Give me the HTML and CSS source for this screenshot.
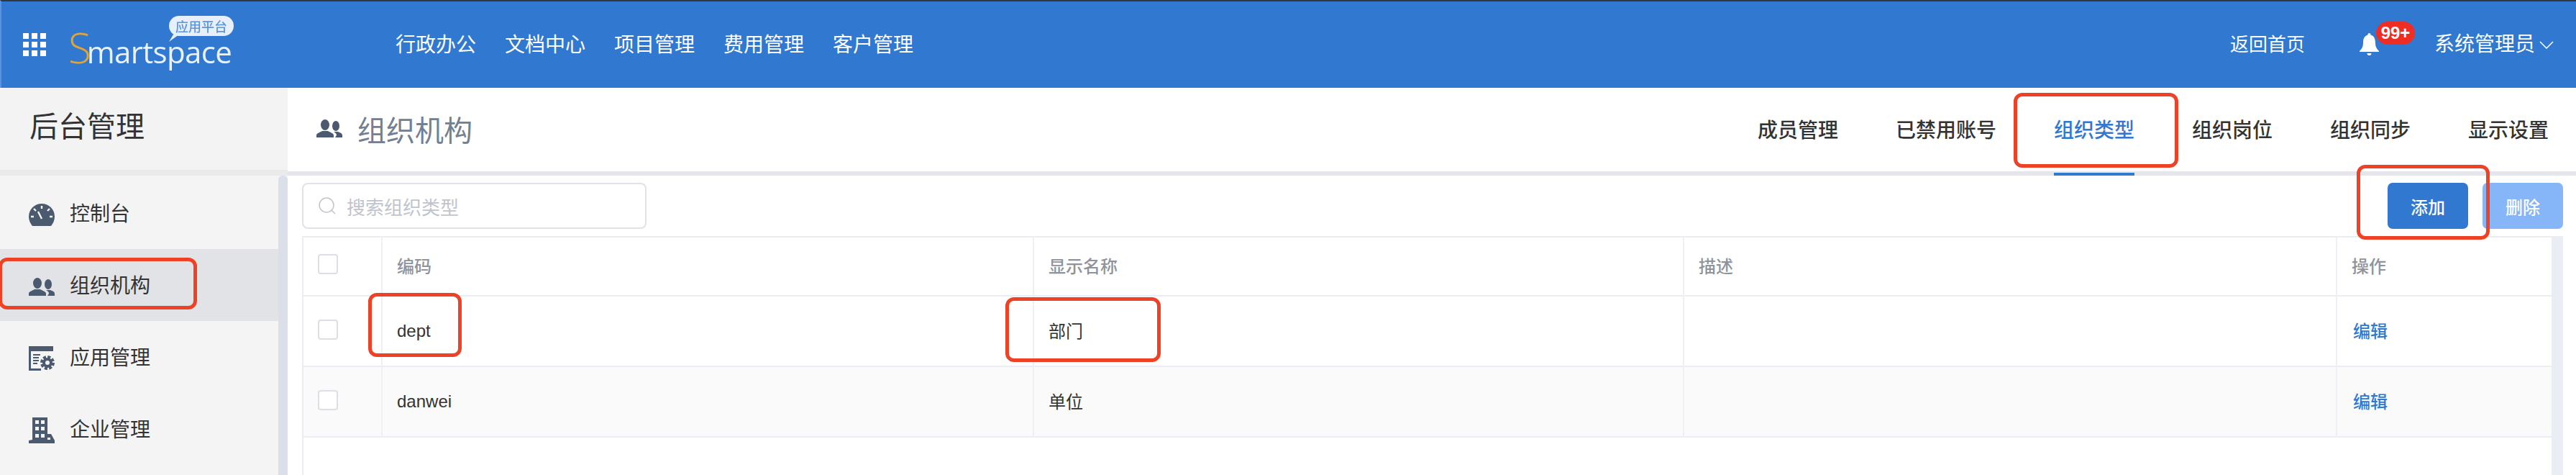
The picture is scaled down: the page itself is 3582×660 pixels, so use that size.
FILE: index.html
```html
<!DOCTYPE html>
<html lang="zh-CN">
<head>
    <meta charset="UTF-8">
    <meta name="viewport" content="width=device-width, initial-scale=1.0">
    <title>后台管理</title>
    <link rel="stylesheet" href="styles.css">
</head>
<body>
    <header class="topbar">
        <div class="apps-icon">
            <span></span><span></span><span></span>
            <span></span><span></span><span></span>
            <span></span><span></span><span></span>
        </div>
        <div class="logo">
            <span class="logo-s">S</span><span class="logo-rest">martspace</span>
            <span class="logo-bubble">应用平台</span>
            <svg class="logo-tail" width="14" height="10" viewBox="0 0 14 10"><path d="M6 0h8L0 10z"/></svg>
        </div>
        <nav class="top-nav">
            <a>行政办公</a>
            <a>文档中心</a>
            <a>项目管理</a>
            <a>费用管理</a>
            <a>客户管理</a>
        </nav>
        <div class="top-right">
            <a class="home-link">返回首页</a>
            <div class="bell">
                <svg width="27" height="32" viewBox="0 0 27 32"><path d="M13.5 0c-1.5 0-2 1-2 2.5C6 4 5 9 5 14c0 5-2 8-5 11v1h27v-1c-3-3-5-6-5-11 0-5-1-10-6.5-11.5C15.500 1 15 0 13.500 0zM10.500 28a3 3 0 0 0 6 0z"/></svg>
                <span class="badge">99+</span>
            </div>
            <a class="user-link">系统管理员</a>
            <svg class="chevron" width="20" height="11" viewBox="0 0 20 11"><path d="M1 1l9 9 9-9"/></svg>
        </div>
    </header>

    <div class="main">
        <aside class="sidebar">
            <div class="side-title">后台管理</div>
            <div class="side-body">
                <ul class="side-menu">
                    <li>
                        <svg class="side-icon" width="36" height="31" viewBox="0 0 36 31">
                            <path d="M5 31C2 27 0 23 0 18a18 18 0 0 1 36 0c0 5-2 9-5 13z"/>
                            <path class="cut" d="M18 21l-5-10M18 3v4M7 7l3 3M29 7l-3 3M3 18h4M33 18h-4"/>
                        </svg>
                        控制台
                    </li>
                    <li class="active">
                        <svg class="side-icon" width="36" height="25" viewBox="0 0 36 25">
                            <ellipse cx="12" cy="7.500" rx="6" ry="7.500"/>
                            <path d="M0 25v-3c0-3 5-4 8-6h8c3 2 8 3 8 6v3z"/>
                            <ellipse cx="27" cy="9" rx="5" ry="7"/>
                            <path d="M26 25h10v-3c0-3-4-4-6-5h-6c3 2 4 3 4 5z" />
                        </svg>
                        组织机构
                    </li>
                    <li>
                        <svg class="side-icon" width="36" height="34" viewBox="0 0 36 34">
                            <path d="M0 0h34v7H3v24h14v3H0z"/>
                            <path d="M6 11h10v2H6zM6 15h8v2H6zM6 19h8v2H6zM6 23h6v2H6z"/>
                            <circle class="gear-teeth" cx="26" cy="23" r="8"/>
                            <circle class="gear-ring" cx="26" cy="23" r="5"/>
                        </svg>
                        应用管理
                    </li>
                    <li>
                        <svg class="side-icon" width="36" height="36" viewBox="0 0 36 36">
                            <path d="M5 0h21v23l5 0 5 9v4H0v-4l5-1z"/>
                            <path class="windows" d="M9 4h5v5H9zM17 4h5v5h-5zM9 13h5v5H9zM17 13h5v5h-5zM9 23h5v5H9zM17 23h5v5h-5zM26 28h4v3h-4z"/>
                        </svg>
                        企业管理
                    </li>
                </ul>
                <div class="side-scroll"></div>
            </div>
        </aside>

        <section class="content">
            <div class="content-head">
                <div class="page-title">
                    <svg class="side-icon" width="36" height="25" viewBox="0 0 36 25">
                        <ellipse cx="12" cy="7.500" rx="6" ry="7.500"/>
                        <path d="M0 25v-3c0-3 5-4 8-6h8c3 2 8 3 8 6v3z"/>
                        <ellipse cx="27" cy="9" rx="5" ry="7"/>
                        <path d="M26 25h10v-3c0-3-4-4-6-5h-6c3 2 4 3 4 5z" />
                    </svg>
                    <h1>组织机构</h1>
                </div>
                <div class="tabs">
                    <a>成员管理</a>
                    <a>已禁用账号</a>
                    <a class="current">组织类型</a>
                    <a>组织岗位</a>
                    <a>组织同步</a>
                    <a>显示设置</a>
                </div>
            </div>

            <div class="toolbar">
                <div class="search">
                    <svg width="24" height="24" viewBox="0 0 24 24"><circle cx="11" cy="11" r="10"/><path d="M18 18l5 5"/></svg>
                    <span>搜索组织类型</span>
                </div>
                <div class="buttons">
                    <button class="btn">添加</button>
                    <button class="btn btn-off">删除</button>
                </div>
            </div>

            <div class="table-wrap">
                <div class="table-area">
                    <table>
                        <colgroup>
                            <col class="col-check">
                            <col class="col-code">
                            <col class="col-name">
                            <col class="col-desc">
                            <col class="col-op">
                        </colgroup>
                        <thead>
                            <tr>
                                <th><i class="check"></i></th>
                                <th>编码</th>
                                <th>显示名称</th>
                                <th>描述</th>
                                <th>操作</th>
                            </tr>
                        </thead>
                        <tbody>
                            <tr>
                                <td><i class="check"></i></td>
                                <td>dept</td>
                                <td class="cn">部门</td>
                                <td></td>
                                <td class="cn"><a class="edit">编辑</a></td>
                            </tr>
                            <tr class="even">
                                <td><i class="check"></i></td>
                                <td>danwei</td>
                                <td class="cn">单位</td>
                                <td></td>
                                <td class="cn"><a class="edit">编辑</a></td>
                            </tr>
                        </tbody>
                    </table>
                </div>
                <div class="table-scroll"></div>
            </div>
        </section>
    </div>

    <!-- red marks drawn over the screenshot -->
    <div class="mark mark-side"></div>
    <div class="mark mark-tab"></div>
    <div class="mark mark-add"></div>
    <div class="mark mark-dept"></div>
    <div class="mark mark-name"></div>
</body>
</html>
```

FILE: styles.css
```css
* {
    box-sizing: border-box;
}

html, body {
    height: 100%;
    overflow: hidden;
}

body {
    position: relative;
    margin: 0;
    display: flex;
    flex-direction: column;
    background: #fff;
    color: #333;
    font-family: "Liberation Sans", "Noto Sans CJK SC", sans-serif;
}

a {
    color: inherit;
}

/* top bar */
.topbar {
    flex: none;
    height: 122px;
    display: flex;
    align-items: center;
    padding-left: 30px;
    background: #3178d1;
    border-top: 2px solid #32363f;
    border-left: 2px solid #5b94dc;
    color: #fff;
}

.apps-icon {
    flex: none;
    width: 32px;
    display: grid;
    grid-template-columns: repeat(3, 8px);
    grid-auto-rows: 8px;
    gap: 4px;
}

.apps-icon span {
    background: #fff;
}

.logo {
    position: relative;
    flex: none;
    width: 240px;
    height: 100%;
    margin-left: 31px;
    padding-top: 24px;
    white-space: nowrap;
    font-family: "Open Sans", sans-serif;
    filter: blur(0.7px);
}

.logo-s {
    color: #e0a535;
    font-size: 58px;
    font-weight: 300;
    line-height: 80px;
    letter-spacing: -6px;
}

.logo-rest {
    font-size: 42px;
    line-height: 80px;
    letter-spacing: -0.600px;
    color: #e9f1fb;
}

.logo-bubble {
    position: absolute;
    left: 140px;
    top: 20px;
    width: 90px;
    height: 28px;
    border-radius: 14px;
    background: #e6effa;
    color: #5d95dc;
    font-family: "Noto Sans CJK SC", sans-serif;
    font-size: 18px;
    font-weight: 500;
    line-height: 28px;
    text-align: center;
}

.logo-tail {
    position: absolute;
    left: 140px;
    top: 46px;
    fill: #e6effa;
}

.top-nav {
    display: flex;
    gap: 40px;
    margin-left: 215px;
    padding-top: 1px;
    font-size: 28px;
    line-height: 40px;
}

.top-right {
    display: flex;
    align-items: center;
    margin-left: auto;
    padding-right: 31px;
}

.home-link {
    font-size: 26px;
    line-height: 40px;
}

.bell {
    position: relative;
    width: 27px;
    height: 32px;
    margin-left: 76px;
    fill: #fff;
}

.bell svg {
    display: block;
}

.badge {
    position: absolute;
    left: 23px;
    top: -16px;
    width: 54px;
    height: 32px;
    border-radius: 16px;
    background: #ee2e24;
    font-size: 24px;
    font-weight: bold;
    line-height: 32px;
    text-align: center;
}

.user-link {
    margin-left: 77px;
    font-size: 28px;
    line-height: 40px;
}

.chevron {
    margin-left: 6px;
    fill: none;
    stroke: #fff;
    stroke-width: 1.5;
}

/* page body */
.main {
    flex: 1;
    display: flex;
    min-height: 0;
}

.sidebar {
    flex: none;
    width: 400px;
    display: flex;
    flex-direction: column;
    background: #f4f4f5;
}

.side-title {
    flex: none;
    height: 122px;
    padding: 34px 0 0 41px;
    border-bottom: 8px solid #eaeaea;
    background: #f3f3f3;
    font-size: 40px;
    line-height: 40px;
}

.side-body {
    flex: 1;
    display: flex;
}

.side-menu {
    flex: 1;
    margin: 2px 0 0;
    padding: 0;
    list-style: none;
}

.side-menu li {
    height: 100px;
    display: flex;
    align-items: center;
    gap: 21px;
    padding: 0 0 2px 40px;
    font-size: 28px;
}

.side-menu li.active {
    background: #e2e3e7;
}

.side-menu .side-icon {
    margin-top: 6px;
}

.side-scroll {
    flex: none;
    width: 13px;
    border-radius: 6px 6px 0 0;
    background: #dbdfe8;
}

.side-icon {
    flex: none;
    fill: #4b5a6e;
}

.side-icon .cut {
    fill: none;
    stroke: #f4f4f5;
    stroke-width: 2.4;
}

.side-icon .windows {
    fill: #f4f4f5;
}

.gear-teeth {
    fill: none;
    stroke: #4b5a6e;
    stroke-width: 4;
    stroke-dasharray: 4 2.280;
}

.gear-ring {
    fill: #f4f4f5;
    stroke: #4b5a6e;
    stroke-width: 4;
}

.content {
    flex: 1;
    min-width: 0;
    display: flex;
    flex-direction: column;
}

.content-head {
    flex: none;
    height: 122px;
    display: flex;
    align-items: center;
    justify-content: space-between;
    padding: 4px 38px 0 40px;
    border-bottom: 6px solid #e4e6eb;
}

.page-title {
    display: flex;
    align-items: center;
    gap: 21px;
}

.page-title .side-icon {
    margin-bottom: 7px;
}

h1 {
    margin: 0;
    color: #738091;
    font-size: 40px;
    font-weight: normal;
    line-height: 50px;
}

.tabs {
    display: flex;
    gap: 80px;
    font-size: 28px;
    font-weight: 500;
    line-height: 40px;
}

.tabs a {
    position: relative;
}

.tabs .current {
    color: #3178d1;
}

.tabs .current::after {
    content: "";
    position: absolute;
    left: 0;
    right: 0;
    bottom: -42px;
    height: 4px;
    background: #3178d1;
}

.toolbar {
    flex: none;
    height: 84px;
    display: flex;
    justify-content: space-between;
    padding: 10px 18px 10px 20px;
}

.search {
    width: 479px;
    display: flex;
    align-items: center;
    gap: 15px;
    padding-left: 21px;
    border: 2px solid #e0e2e8;
    border-radius: 8px;
    color: #c0c4cc;
    font-size: 26px;
}

.search svg {
    fill: none;
    stroke: #c0c4cc;
    stroke-width: 1.500;
}

.buttons {
    display: flex;
    gap: 20px;
}

.btn {
    width: 112px;
    border: none;
    border-radius: 7px;
    background: #3178d1;
    color: #fff;
    font-family: inherit;
    font-size: 24px;
    font-weight: 500;
}

.btn-off {
    background: #86b5f8;
}

.table-wrap {
    flex: 1;
    min-height: 0;
    display: flex;
    margin: 0 18px 0 20px;
}

.table-area {
    flex: 1;
    border-top: 2px solid #eaedf3;
    border-left: 2px solid #eaedf3;
}

.table-scroll {
    flex: none;
    width: 16px;
    background: #eaedf3;
}

table {
    width: 3126px;
    table-layout: fixed;
    border-collapse: separate;
    border-spacing: 0;
    font-size: 24px;
}

.col-check { width: 110px; }
.col-code { width: 906px; }
.col-name { width: 904px; }
.col-desc { width: 908px; }
.col-op { width: 298px; }

th, td {
    padding: 0 0 0 20px;
    border-right: 2px solid #eef0f5;
    border-bottom: 2px solid #eaedf3;
    text-align: left;
}

th:last-child, td:last-child {
    border-right: none;
}

th {
    height: 82px;
    padding-bottom: 3px;
    color: #909399;
    font-weight: 500;
}

td {
    height: 98px;
}

td.cn {
    padding-bottom: 3px;
}

.even td {
    background: #fafafa;
}

.check {
    display: block;
    width: 28px;
    height: 28px;
    margin-top: -4px;
    border: 2px solid #dcdfe6;
    border-radius: 4px;
    background: #fff;
}

.edit {
    margin-left: 2px;
    color: #3178d1;
    font-weight: 500;
}

/* annotations */
.mark {
    position: absolute;
    border: 5px solid #ee4226;
    border-radius: 12px;
}

.mark-side {
    left: -2px;
    top: 358px;
    width: 276px;
    height: 72px;
}

.mark-tab {
    left: 2800px;
    top: 129px;
    width: 229px;
    height: 104px;
}

.mark-add {
    left: 3277px;
    top: 229px;
    width: 185px;
    height: 104px;
}

.mark-dept {
    left: 512px;
    top: 407px;
    width: 130px;
    height: 89px;
}

.mark-name {
    left: 1398px;
    top: 413px;
    width: 216px;
    height: 90px;
}
```
